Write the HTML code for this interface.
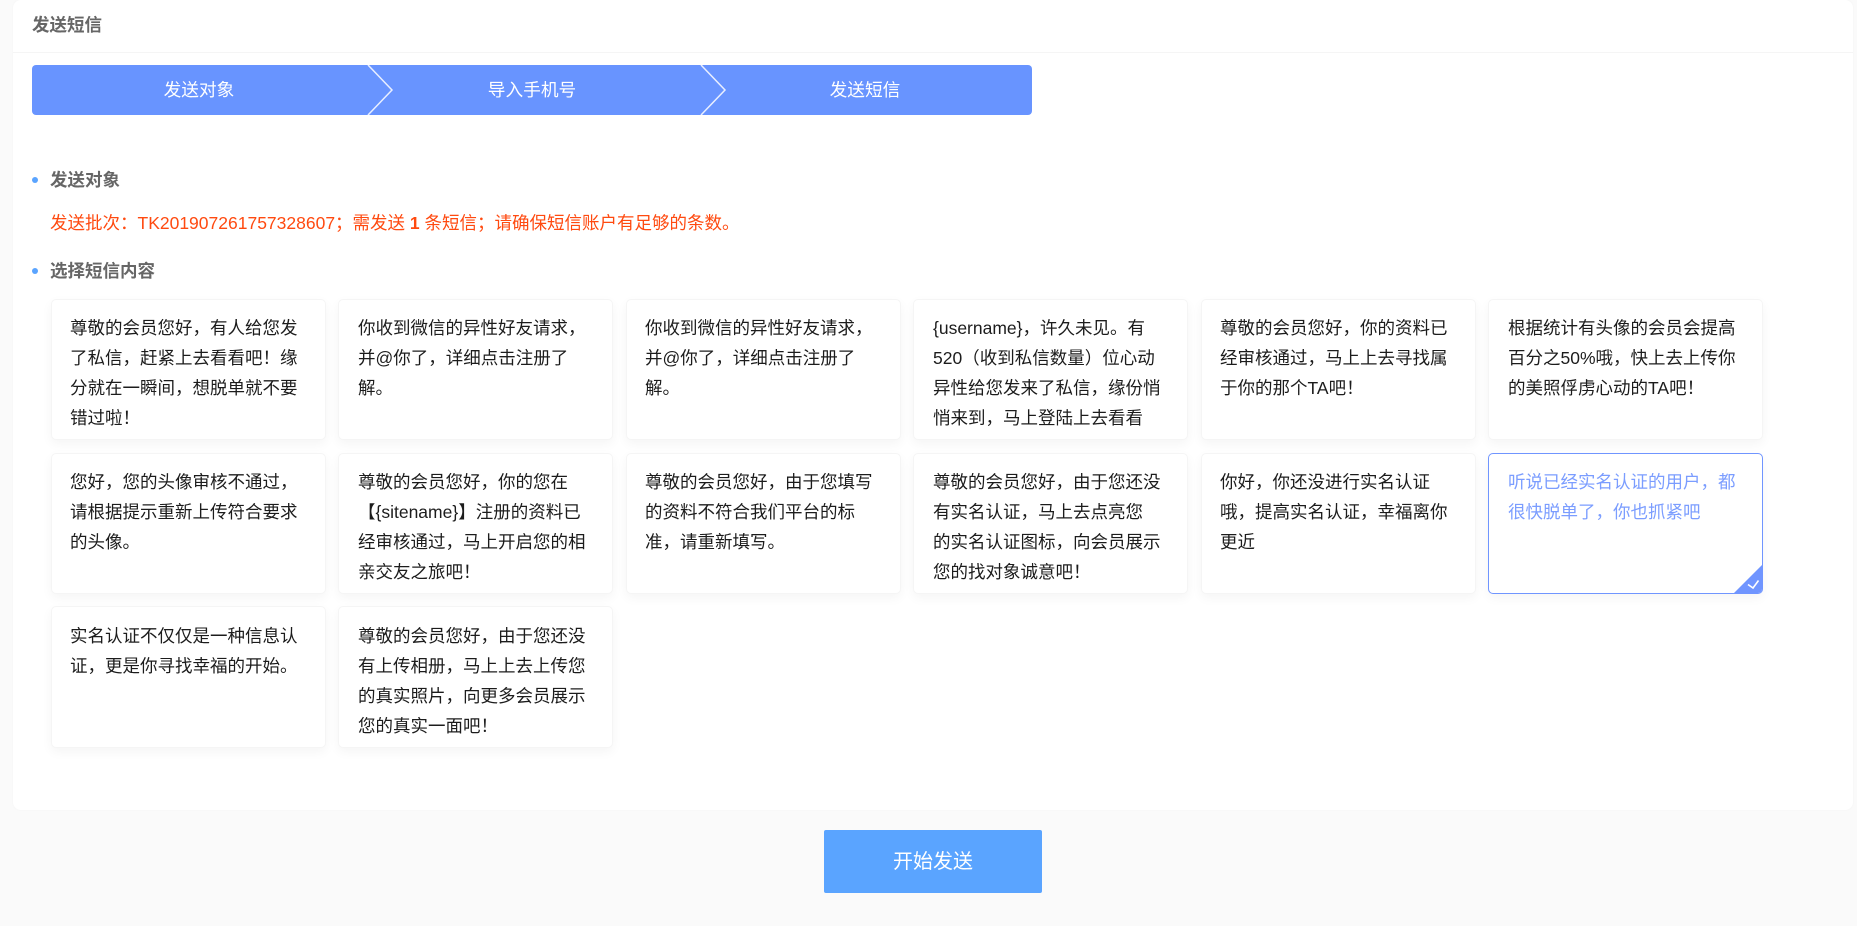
<!DOCTYPE html>
<html lang="zh-CN"><head><meta charset="utf-8"><title>发送短信</title>
<style>
html,body{margin:0;padding:0}
body{width:1857px;height:926px;background:#fafafa;position:relative;overflow:hidden;font-family:"Liberation Sans","Noto Sans CJK SC",sans-serif;font-size:17.5px;color:#222}
.abs{position:absolute;white-space:nowrap}
#main{position:absolute;left:13px;top:0;width:1840px;height:810px;background:#fff;border-radius:8px;box-shadow:0 0 3px rgba(0,0,0,.025)}
#line{position:absolute;left:13px;top:52px;width:1840px;height:1px;background:#f5f5f5}
.h{font-weight:bold;color:#666;line-height:30px;height:30px}
#steps{position:absolute;left:32px;top:65px;width:1000px;height:50px;background:#6894ff;border-radius:4px}
.st{position:absolute;top:65px;height:50px;line-height:50px;color:#fff;font-size:17.7px;text-align:center;width:200px}
.dot{position:absolute;left:32px;width:6px;height:6px;border-radius:50%;background:#5aa4ff}
.c{position:absolute;width:275px;height:141px;box-sizing:border-box;background:#fff;border:1px solid #f5f5f5;border-radius:5px;box-shadow:0 4px 11px rgba(0,0,0,.045);padding:13px 0 0 18px;line-height:30px;white-space:nowrap;overflow:hidden;color:#1c1c1c}
.p{padding-left:19px}
.r3{top:606px;height:142px;padding-top:14px}
.sel{border-color:#7095ff;color:#7b9dff}
#btn{position:absolute;left:824px;top:830px;width:218px;height:63px;line-height:65px;text-align:center;background:#5aa4ff;color:#fff;font-size:20px;border-radius:2px}
</style></head><body>
<div id="main"></div><div id="line"></div>
<div class="abs h" style="left:32px;top:10px">发送短信</div>
<div id="steps"></div>
<svg class="abs" style="left:360px;top:65px" width="380" height="50" viewBox="0 0 380 50" fill="none" stroke="#e9efff" stroke-width="1.5"><path d="M8 0L32 25L8 50"/><path d="M341 0L365 25L341 50"/></svg>
<div class="st" style="left:99px">发送对象</div>
<div class="st" style="left:432px">导入手机号</div>
<div class="st" style="left:765px">发送短信</div>
<div class="dot" style="top:177px"></div>
<div class="abs h" style="left:50px;top:165px">发送对象</div>
<div class="abs" style="left:50px;top:208px;line-height:30px;color:#ff4a10">发送批次：TK201907261757328607；需发送 <b>1</b> 条短信；请确保短信账户有足够的条数。</div>
<div class="dot" style="top:268px"></div>
<div class="abs h" style="left:50px;top:256px">选择短信内容</div>

<div class="c" style="left:51px;top:299px">尊敬的会员您好，有人给您发<br>了私信，赶紧上去看看吧！缘<br>分就在一瞬间，想脱单就不要<br>错过啦！</div>
<div class="c p" style="left:338px;top:299px">你收到微信的异性好友请求，<br>并@你了，详细点击注册了<br>解。</div>
<div class="c" style="left:626px;top:299px">你收到微信的异性好友请求，<br>并@你了，详细点击注册了<br>解。</div>
<div class="c p" style="left:913px;top:299px">{username}，许久未见。有<br>520（收到私信数量）位心动<br>异性给您发来了私信，缘份悄<br>悄来到，马上登陆上去看看</div>
<div class="c" style="left:1201px;top:299px">尊敬的会员您好，你的资料已<br>经审核通过，马上上去寻找属<br>于你的那个TA吧！</div>
<div class="c p" style="left:1488px;top:299px">根据统计有头像的会员会提高<br>百分之50%哦，快上去上传你<br>的美照俘虏心动的TA吧！</div>

<div class="c" style="left:51px;top:453px">您好，您的头像审核不通过，<br>请根据提示重新上传符合要求<br>的头像。</div>
<div class="c p" style="left:338px;top:453px">尊敬的会员您好，你的您在<br>【{sitename}】注册的资料已<br>经审核通过，马上开启您的相<br>亲交友之旅吧！</div>
<div class="c" style="left:626px;top:453px">尊敬的会员您好，由于您填写<br>的资料不符合我们平台的标<br>准，请重新填写。</div>
<div class="c p" style="left:913px;top:453px">尊敬的会员您好，由于您还没<br>有实名认证，马上去点亮您<br>的实名认证图标，向会员展示<br>您的找对象诚意吧！</div>
<div class="c" style="left:1201px;top:453px">你好，你还没进行实名认证<br>哦，提高实名认证，幸福离你<br>更近</div>
<div class="c p sel" style="left:1488px;top:453px">听说已经实名认证的用户，都<br>很快脱单了，你也抓紧吧
<svg style="position:absolute;right:-1px;bottom:-1px" width="30" height="30" viewBox="0 0 30 30"><path d="M30 0V25a5 5 0 0 1-5 5H0Z" fill="#7095ff"/><path d="M15 20.5L20 24L25.5 16.5" fill="none" stroke="#fff" stroke-width="1.6"/></svg></div>

<div class="c r3" style="left:51px">实名认证不仅仅是一种信息认<br>证，更是你寻找幸福的开始。</div>
<div class="c p r3" style="left:338px">尊敬的会员您好，由于您还没<br>有上传相册，马上上去上传您<br>的真实照片，向更多会员展示<br>您的真实一面吧！</div>

<div id="btn">开始发送</div>
</body></html>
